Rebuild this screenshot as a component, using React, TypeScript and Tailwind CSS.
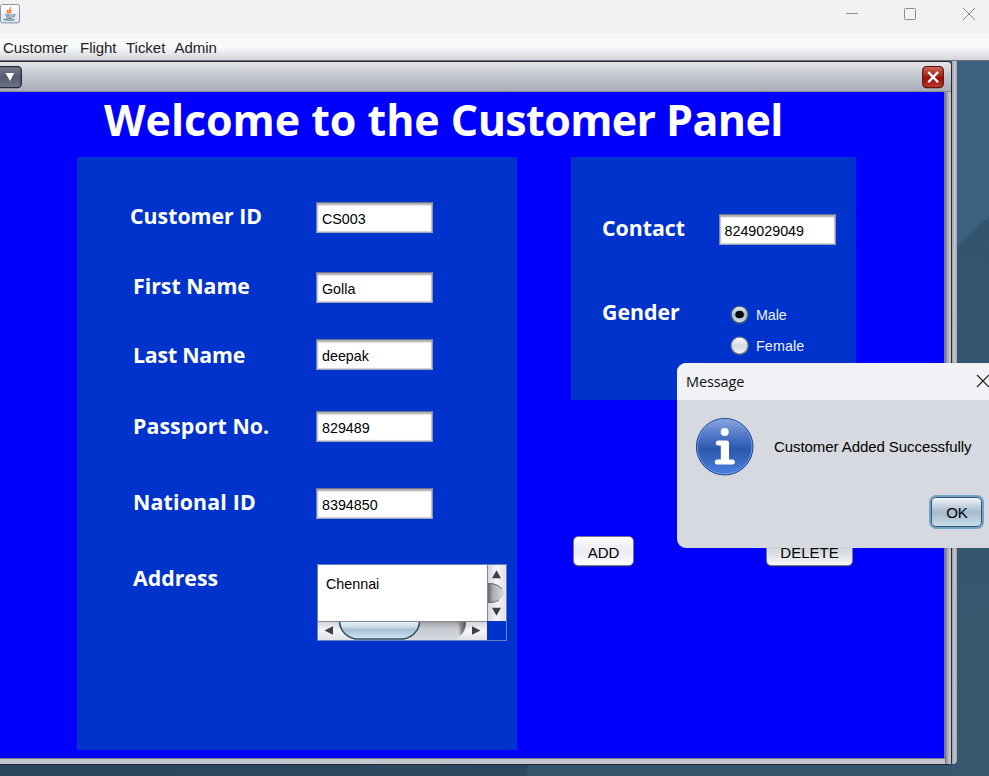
import React from "react";

const sans = "font-['Liberation_Sans',Arial,sans-serif]";
const segoe = "font-['Open_Sans','Noto_Sans',sans-serif]";

function JavaIcon() {
  return (
    <svg width="20" height="20" viewBox="0 0 20 20" className="block">
      <defs>
        <linearGradient id="jv" x1="0" y1="0" x2="0" y2="1">
          <stop offset="0" stopColor="#ffffff" />
          <stop offset="1" stopColor="#dfe3e8" />
        </linearGradient>
      </defs>
      <rect x="0.5" y="0.5" width="19" height="18.4" rx="2" fill="url(#jv)" stroke="#8497a8" />
      <path d="M10 3.2c2 1.6-2.6 3-.7 5.6M8 6c-2 1.6-.6 2.6 1 4M11.6 6.2c-1.8.9-1.6 2-.6 3.4" fill="none" stroke="#ea8c4d" strokeWidth="1.5" />
      <path d="M5 10.4c2 .9 6 .9 8.6.1M6 12.5c2 .7 5 .7 6.6.2M13.4 10.6c2-.6 2.2 1.5-.4 2.2M3.6 15c1.6 1.7 9.6 1.6 11-.2M6.4 14.2c1.6.6 4 .6 5.8.1" fill="none" stroke="#6288a5" strokeWidth="1.1" />
    </svg>
  );
}

function Label({ text, className }: { text: string; className: string }) {
  return (
    <span className={`${segoe} block shrink-0 whitespace-nowrap text-[21.3px] font-bold text-white ${className}`}>
      {text}
    </span>
  );
}

function Field({ value }: { value: string }) {
  return (
    <div
      className={`${sans} h-[31px] w-[117px] shrink-0 border border-t-[#6d7390] border-r-[#8f97b5] border-b-[#9fa5b8] border-l-[#7f86a5] bg-white pl-[5px] text-[14.3px] leading-[32px] text-black shadow-[inset_0_2px_2px_#a8a8ae,inset_1px_0_1px_#cfcfd6,inset_-1px_-1px_1px_#cfcfd6]`}
    >
      {value}
    </div>
  );
}

function Row({ label, value, row, text }: { label: string; value: string; row: string; text: string }) {
  return (
    <div className={`flex h-[31px] ${row}`}>
      <div className="w-[239px] shrink-0">
        <Label text={label} className={text} />
      </div>
      <Field value={value} />
    </div>
  );
}

function Radio({ label, checked, className }: { label: string; checked?: boolean; className: string }) {
  return (
    <div className="flex h-[20px] items-center">
      <svg width="20" height="20" viewBox="0 0 20 20" className="shrink-0">
        <defs>
          <linearGradient id={`rb-${label}`} x1="0" y1="0" x2="0" y2="1">
            <stop offset="0" stopColor={checked ? "#e8eef3" : "#ffffff"} />
            <stop offset="0.5" stopColor={checked ? "#a9bccb" : "#d5d8de"} />
            <stop offset="1" stopColor={checked ? "#cfe0ea" : "#f4f6fa"} />
          </linearGradient>
        </defs>
        <circle cx="9.600" cy="10.300" r="9.200" fill="#3c5c90" opacity="0.45" />
        <circle cx="9.600" cy="9.600" r="8.400" fill={`url(#rb-${label})`} stroke={checked ? "#455b70" : "#80848c"} strokeWidth="1.2" />
        {checked && <ellipse cx="9.600" cy="9.500" rx="4.300" ry="3.800" fill="#060708" />}
      </svg>
      <span className={`${sans} ml-[6px] text-[14.3px] leading-[20px] text-[#f0f3ff] ${className}`}>{label}</span>
    </div>
  );
}

function AddressArea() {
  return (
    <div className="mt-px h-[77px] w-[190px] border border-[#6c7fbd]">
      <div className="flex h-[56px]">
        <div className={`${sans} w-[169px] bg-white pt-[8px] pl-[8px] text-[14.3px] leading-[22px] text-black`}>Chennai</div>
        <svg width="19" height="56" viewBox="0 0 19 56" className="block">
          <defs>
            <linearGradient id="vbar" x1="0" x2="1">
              <stop offset="0" stopColor="#cfd2d9" />
              <stop offset="0.5" stopColor="#f5f5f7" />
              <stop offset="1" stopColor="#dfe1e6" />
            </linearGradient>
            <linearGradient id="vtrack" x1="0" x2="1">
              <stop offset="0" stopColor="#5e6066" />
              <stop offset="0.35" stopColor="#b0b2b8" />
              <stop offset="1" stopColor="#d8dae1" />
            </linearGradient>
          </defs>
          <rect width="19" height="56" fill="url(#vbar)" />
          <path d="M0.500 18C9 18 14 21 17.500 28C14 35 9 38 0.500 38Z" fill="url(#vtrack)" />
          <path d="M1 18.500C8 18.500 12 20.500 15 24M1 37.500C7 37.500 10 36.500 12 35" fill="none" stroke="#66686c" strokeWidth="1" />
          <path d="M9.500 5.300L14 13.300H5ZM9.500 50.800L14 42.800H5Z" fill="#3d3f42" />
          <path d="M0.500 0V56" stroke="#85878c" />
        </svg>
      </div>
      <div className="flex h-[19px]">
        <svg width="169" height="19" viewBox="0 0 169 19" className="block">
          <defs>
            <linearGradient id="hbar" x1="0" y1="0" x2="0" y2="1">
              <stop offset="0" stopColor="#cfd2d9" />
              <stop offset="0.5" stopColor="#f5f5f7" />
              <stop offset="1" stopColor="#dfe1e6" />
            </linearGradient>
            <linearGradient id="htrack" x1="0" y1="0" x2="0" y2="1">
              <stop offset="0" stopColor="#9a9ca2" />
              <stop offset="0.4" stopColor="#c8cad1" />
              <stop offset="1" stopColor="#d6d9e0" />
            </linearGradient>
            <linearGradient id="hend" x1="0" x2="1">
              <stop offset="0" stopColor="#55575c" stopOpacity="0" />
              <stop offset="1" stopColor="#505257" />
            </linearGradient>
            <linearGradient id="hthumb" x1="0" y1="0" x2="0" y2="1">
              <stop offset="0" stopColor="#edf3f8" />
              <stop offset="0.3" stopColor="#cfdeea" />
              <stop offset="0.5" stopColor="#a5bfd3" />
              <stop offset="1" stopColor="#d5e9f6" />
            </linearGradient>
          </defs>
          <rect width="169" height="19" fill="url(#hbar)" />
          <path d="M21 0H148C148 9 146 14 137 19H40C27 16 21 9 21 0Z" fill="url(#htrack)" />
          <path d="M138 0H148C148 7 146 12 141 15C143 10 141 4 138 0Z" fill="url(#hend)" />
          <path d="M21.500 0C21.500 10 30 18 40 18H83C93 18 101.500 10 101.500 0Z" fill="url(#hthumb)" stroke="#2f4f69" strokeWidth="1.600" />
          <path d="M6.500 9.500L15 5.200V13.800ZM162.500 9.500L154 5.200V13.800Z" fill="#3d3f42" />
          <path d="M0 0.500H169" stroke="#85878c" />
        </svg>
        <div className="h-[19px] w-[19px] bg-[#0033cc]" />
      </div>
    </div>
  );
}

function PushButton({ label, className }: { label: string; className: string }) {
  return (
    <div
      className={`${sans} flex h-[30px] items-center justify-center rounded-[5px] border border-[#6f7890] bg-linear-to-b text-[15px] text-black shadow-[0_1px_1px_#2020a0] ${className}`}
    >
      <span className="pt-[4px]">{label}</span>
    </div>
  );
}

function MessageDialog() {
  return (
    <div className="absolute top-[363px] left-[677px] h-[185px] w-[330px] overflow-hidden rounded-[9px] bg-[#d6d9df] shadow-[0_0_1px_#30406a]">
      <div className="flex h-[37px] items-center bg-[#f1f2f6] pl-[9px]">
        <span className={`${segoe} w-[290px] text-[14.5px] tracking-[-0.1px] text-[#101010]`}>Message</span>
        <svg width="14" height="14" viewBox="0 0 14 14" className="mb-[2px]">
          <path d="M1 1L13 13M13 1L1 13" stroke="#222" strokeWidth="1.200" />
        </svg>
      </div>
      <div className="flex h-[94px] items-center pl-[18px]">
        <svg width="60" height="60" viewBox="0 0 60 60" className="block shrink-0">
          <defs>
            <linearGradient id="info" x1="0" y1="0" x2="0" y2="1">
              <stop offset="0" stopColor="#8ba7df" />
              <stop offset="0.3" stopColor="#4f77c6" />
              <stop offset="0.55" stopColor="#2a57ad" />
              <stop offset="1" stopColor="#4d82e0" />
            </linearGradient>
          </defs>
          <circle cx="29.700" cy="29.700" r="28.300" fill="url(#info)" stroke="#1e4595" strokeWidth="1" />
          <circle cx="29.700" cy="29.700" r="27.200" fill="none" stroke="#7d9fe0" strokeWidth="0.800" />
          <circle cx="29.700" cy="15" r="4" fill="#fff" />
          <path d="M23.300 26H31.500V44.500" fill="none" stroke="#fff" strokeWidth="5" strokeLinecap="round" strokeLinejoin="round" />
          <path d="M29.800 26V44" stroke="#fff" strokeWidth="8" />
          <path d="M22.300 45H37.300" stroke="#fff" strokeWidth="5" strokeLinecap="round" />
        </svg>
        <span className={`${sans} ml-[19px] whitespace-nowrap text-[15px] tracking-[-0.07px] text-black`}>Customer Added Successfully</span>
      </div>
      <div className="flex pt-[3px] pl-[254px]">
        <div className={`${sans} flex h-[30px] w-[51px] items-center justify-center rounded-[5px] border border-[#35546f] bg-linear-to-b from-[#f0f4f8] via-[#a5bacb] to-[#c6dcea] pt-[2px] pl-px text-[15px] text-black shadow-[0_0_0_2px_#72a3c9]`}>
          OK
        </div>
      </div>
    </div>
  );
}

export default function App() {
  return (
    <div className="relative flex h-[776px] w-[989px] flex-col overflow-hidden bg-[#35566d]">
      <header className="flex h-[33px] shrink-0 items-start bg-[#f2f2f2]">
        <div className="mt-[4px] w-[846px]">
          <JavaIcon />
        </div>
        <svg width="143" height="33" viewBox="0 0 143 33" fill="none" stroke="#8c8c8c">
          <path d="M0 13.500H12" />
          <rect x="58.500" y="8.500" width="11" height="11" rx="1" />
          <path d="M117 8L129 20M129 8L117 20" />
        </svg>
      </header>

      <nav className={`${sans} flex h-[28px] shrink-0 items-center border-b border-[#70737f] bg-linear-to-b from-[#f5f8f8] via-[#fafbfb] to-[#d3d5dc] pt-[3px] pl-[3px] text-[15px] tracking-[-0.03px] text-[#222]`}>
        <span className="w-[77px]">Customer</span>
        <span className="w-[46px]">Flight</span>
        <span className="w-[48.500px]">Ticket</span>
        <span>Admin</span>
      </nav>

      <main className="flex min-h-0 flex-1 items-start bg-[linear-gradient(100deg,#29465c_0%,#2b4960_58.5%,#35566d_58.6%,#35566d_100%)]">
        <section className="flex h-[704px] w-[952px] shrink-0 flex-col rounded-tr-[5px] rounded-br-[3px] border-t border-r border-b border-[#26272d] bg-[#c4c7d0]">
          <div className="flex h-[30px] shrink-0 items-center rounded-tr-[4px] border-b border-[#868a94] bg-linear-to-b from-[#e4e6e9] via-[#c2c5ce] to-[#aaaeb9] pt-px">
            <svg width="22" height="23" viewBox="0 0 22 23" className="block">
              <defs>
                <linearGradient id="menu" x1="0" y1="0" x2="0" y2="1">
                  <stop offset="0" stopColor="#777f8e" />
                  <stop offset="0.5" stopColor="#525a6c" />
                  <stop offset="1" stopColor="#6d778a" />
                </linearGradient>
              </defs>
              <rect x="-3" y="0.500" width="24.300" height="21.200" rx="4" fill="url(#menu)" stroke="#25272f" strokeWidth="1.300" />
              <path d="M5.500 7H14.200L10 15Z" fill="#fff" />
            </svg>
            <svg width="22" height="23" viewBox="0 0 22 23" className="ml-[900px] block">
              <defs>
                <linearGradient id="close" x1="0" y1="0" x2="0" y2="1">
                  <stop offset="0" stopColor="#c96a5e" />
                  <stop offset="0.45" stopColor="#a92214" />
                  <stop offset="0.55" stopColor="#9a0e05" />
                  <stop offset="1" stopColor="#c03a2a" />
                </linearGradient>
              </defs>
              <rect x="0.700" y="0.500" width="20.600" height="21.200" rx="4" fill="url(#close)" stroke="#5a1310" strokeWidth="1.200" />
              <path d="M6.300 6L16 16.300M16 6L6.300 16.300" stroke="#fff" strokeWidth="2.400" />
            </svg>
          </div>

          <div className="flex min-h-0 flex-1">
            <div className="flex h-[667px] w-[945px] shrink-0 flex-col border-r border-b border-[#777784] bg-[#0000ff]">
              <h1 className={`${segoe} h-[65px] shrink-0 pl-[104px] text-[43px] leading-[55px] font-bold tracking-[-0.05px] whitespace-nowrap text-white`}>
                Welcome to the <span className="tracking-[-0.6px]">Customer Panel</span>
              </h1>
              <div className="flex pl-[77px]">
                <div className="h-[593px] w-[440px] shrink-0 bg-[#0033cc] pt-[45px]">
                  <Row label="Customer ID" value="CS003" row="" text="pl-[53px] leading-[27px]" />
                  <Row label="First Name" value="Golla" row="mt-[39px]" text="pl-[56px] leading-[27px]" />
                  <Row label="Last Name" value="deepak" row="mt-[36px]" text="pl-[56px] leading-[31px] tracking-[-0.2px]" />
                  <Row label="Passport No." value="829489" row="mt-[41px]" text="pl-[56px] leading-[29px] tracking-[0.1px]" />
                  <Row label="National ID" value="8394850" row="mt-[46px]" text="pl-[56px] leading-[27px] tracking-[0.2px]" />
                  <div className="mt-[44px] flex">
                    <div className="w-[240px] shrink-0">
                      <Label text="Address" className="pl-[56px] leading-[29px]" />
                    </div>
                    <AddressArea />
                  </div>
                </div>
                <div className="ml-[54px] w-[285px] shrink-0">
                  <div className="h-[243px] bg-[#0033cc] pt-[57px]">
                    <div className="flex h-[31px]">
                      <div className="w-[147.500px] shrink-0">
                        <Label text="Contact" className="pl-[31px] leading-[27px]" />
                      </div>
                      <Field value="8249029049" />
                    </div>
                    <div className="mt-[53px] flex">
                      <div className="w-[159px] shrink-0">
                        <Label text="Gender" className="pl-[31px] leading-[27px]" />
                      </div>
                      <div className="flex flex-col gap-[11px] pt-[7px]">
                        <Radio label="Male" checked className="tracking-[-0.1px]" />
                        <Radio label="Female" className="tracking-[0.1px]" />
                      </div>
                    </div>
                  </div>
                  <div className="mt-[136px] flex justify-between pr-[3px] pl-[2px]">
                    <PushButton label="ADD" className="w-[61px] from-[#fdfdfe] via-[#e9ebf1] to-[#ffffff]" />
                    <PushButton label="DELETE" className="w-[87px] from-[#fdfdfe] via-[#d6d9df] to-[#f6f8fb]" />
                  </div>
                </div>
              </div>
            </div>
            <div className="w-[6px] bg-linear-to-r from-[#72747e] via-[#b0b3be] to-[#c9cbd2]" />
          </div>
        </section>
        <div className="h-[703px] w-[5px] shrink-0 rounded-br-[4px] bg-linear-to-r from-[#9b9ea8] via-[#c4c6cd] to-[#a3a6af]" />
        <div className="h-full w-[32px] bg-[#35566d]">
          <svg width="32" height="715" viewBox="0 0 32 715" className="block">
            <defs>
              <linearGradient id="desk" x1="0" y1="0" x2="0" y2="1">
                <stop offset="0" stopColor="#31536f" />
                <stop offset="1" stopColor="#37586e" />
              </linearGradient>
            </defs>
            <rect width="32" height="715" fill="url(#desk)" />
            <path d="M0 0H32V155L0 187Z" fill="#3b6080" />
          </svg>
        </div>
      </main>

      <MessageDialog />
    </div>
  );
}
